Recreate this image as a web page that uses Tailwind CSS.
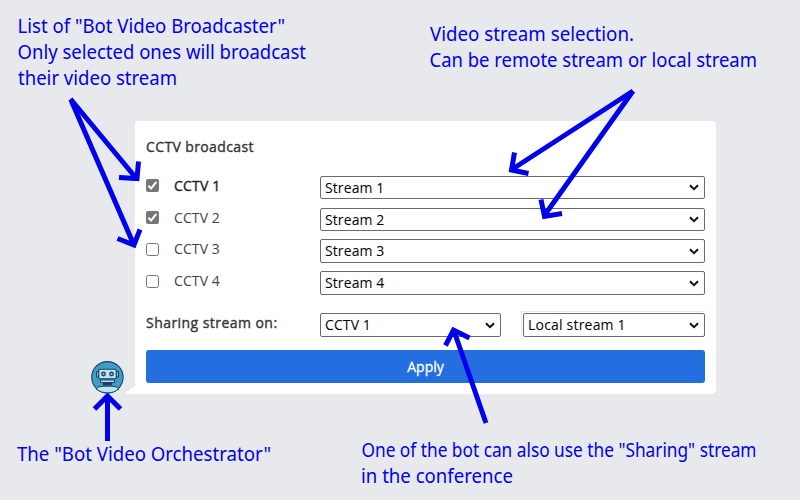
<!DOCTYPE html>
<html lang="en">
<head>
<meta charset="utf-8">
<title>CCTV broadcast</title>
<script src="https://cdn.jsdelivr.net/npm/@tailwindcss/browser@4"></script>
</head>
<body class="relative h-[500px] w-[800px] overflow-hidden bg-[#e8e9ed] pt-[121px] font-['Open_Sans','Noto_Sans',sans-serif] text-[14px] text-[#222]">
<svg class="absolute size-0" aria-hidden="true">
  <symbol id="chev" viewBox="0 0 10 7"><path d="M1 1.2 5 5.2 9 1.2" fill="none" stroke="#101010" stroke-width="2"/></symbol>
  <symbol id="on" viewBox="0 0 13 13"><rect width="13" height="13" rx="2" fill="#767676"/><path d="M2.4 6.8 5.1 9.4 10.4 2.8" fill="none" stroke="#fff" stroke-width="2"/></symbol>
  <symbol id="off" viewBox="0 0 13 13"><rect x=".5" y=".5" width="12" height="12" rx="2" fill="#fff" stroke="#767676"/></symbol>
</svg>

<main class="ml-[135px] flex h-[273px] w-[581px] flex-col rounded-[4px] rounded-bl-none bg-white px-[11px]">
  <h1 class="mt-[16px] h-[20px] leading-[20px] tracking-[0.38px] text-[#333] [-webkit-text-stroke:0.35px_#333]">CCTV broadcast</h1>
  <div class="mt-[19px] flex flex-col gap-[8px]">
    <label class="flex h-[24px] items-start">
      <svg class="mt-[3px] size-[13px]"><use href="#on"/></svg>
      <span class="ml-[15px] w-[146px] leading-[20px] tracking-[0.2px] [-webkit-text-stroke:0.35px_#222]">CCTV 1</span>
      <span class="flex h-[23px] w-[385px] items-center justify-between rounded-[2px] border border-[#6b6b6b] pr-[5px] pl-[4px] leading-[21px] tracking-[0.1px] text-black"><span>Stream 1</span><svg class="h-[7px] w-[10px]"><use href="#chev"/></svg></span>
    </label>
    <label class="flex h-[23px] items-start">
      <svg class="mt-[3px] size-[13px]"><use href="#on"/></svg>
      <span class="ml-[15px] w-[146px] leading-[20px] tracking-[0.1px] text-[#444]">CCTV 2</span>
      <span class="flex h-[23px] w-[385px] items-center justify-between rounded-[2px] border border-[#6b6b6b] pr-[5px] pl-[4px] leading-[21px] tracking-[0.1px] text-black"><span>Stream 2</span><svg class="h-[7px] w-[10px]"><use href="#chev"/></svg></span>
    </label>
    <label class="flex h-[24px] items-start">
      <svg class="mt-[4px] size-[13px]"><use href="#off"/></svg>
      <span class="ml-[15px] w-[146px] leading-[20px] tracking-[0.1px] text-[#444]">CCTV 3</span>
      <span class="flex h-[24px] w-[385px] items-center justify-between rounded-[2px] border border-[#6b6b6b] pr-[5px] pl-[4px] leading-[22px] tracking-[0.1px] text-black"><span>Stream 3</span><svg class="h-[7px] w-[10px]"><use href="#chev"/></svg></span>
    </label>
    <label class="flex h-[24px] items-start">
      <svg class="mt-[4px] size-[13px]"><use href="#off"/></svg>
      <span class="ml-[15px] w-[146px] leading-[20px] tracking-[0.1px] text-[#444]">CCTV 4</span>
      <span class="flex h-[24px] w-[385px] items-center justify-between rounded-[2px] border border-[#6b6b6b] pr-[5px] pl-[4px] leading-[22px] tracking-[0.1px] text-black"><span>Stream 4</span><svg class="h-[7px] w-[10px]"><use href="#chev"/></svg></span>
    </label>
  </div>
  <div class="mt-[16px] flex h-[28px] items-start">
    <span class="mt-[2px] w-[174px] leading-[20px] tracking-[0.45px] text-[#333] [-webkit-text-stroke:0.35px_#333]">Sharing stream on:</span>
    <span class="mt-[2px] flex h-[24px] w-[181px] items-center justify-between rounded-[2px] border border-[#6b6b6b] pr-[5px] pl-[4px] leading-[22px] tracking-[0.1px] text-black"><span>CCTV 1</span><svg class="h-[7px] w-[10px]"><use href="#chev"/></svg></span>
    <span class="ml-[20px] h-[28px] w-[184px] border-t border-l border-[#e8eaf5] pt-px pl-px"><span class="flex h-[24px] w-[182px] items-center justify-between rounded-[2px] border border-[#6b6b6b] pr-[5px] pl-[4px] leading-[22px] tracking-[0.2px] text-black"><span>Local stream 1</span><svg class="h-[7px] w-[10px]"><use href="#chev"/></svg></span></span>
  </div>
  <button class="mt-[11px] h-[33px] w-[559px] rounded-[3px] bg-[#246fe0] leading-[33px] text-white [-webkit-text-stroke:0.3px_white]">Apply</button>
</main>

<!-- Bubble tail, bot avatar and annotations laid over the dialog -->
<svg class="absolute inset-0 h-[500px] w-[800px]" viewBox="0 0 800 500">
  <path d="M135 386 124 394H136V386Z" fill="#fff"/>
  <g transform="translate(91 361)">
    <circle cx="16.4" cy="16.3" r="15.7" fill="#429dc5" stroke="#17425f" stroke-width="1.1"/>
    <path d="M5 28Q7 25.2 12 25.2H21Q26 25.2 28 28Q23 32 16.5 32T5 28Z" fill="#b9e5f8" stroke="#17425f"/>
    <path d="M12 21.5H21V24.500H12Z" fill="#17425f"/>
    <path d="M9.5 19H23.5V21.5H9.5Z" fill="#b9e5f8" stroke="#17425f"/>
    <path d="M5.5 10.5H8V16H5.5ZM25 10.5H27.5V16H25Z" fill="#70bce0" stroke="#17425f"/>
    <rect x="7.8" y="8.3" width="17.4" height="9.500" rx="1" fill="#b9e5f8" stroke="#17425f" stroke-width="1.1"/>
    <circle cx="12.5" cy="13" r="2.400" fill="#17425f"/><circle cx="20.5" cy="13" r="2.400" fill="#17425f"/>
    <circle cx="12.5" cy="13" r="1.100" fill="#e7b56b"/><circle cx="20.5" cy="13" r="1.100" fill="#e7b56b"/>
  </g>
  <g fill="none" stroke="#0000eb" stroke-width="5" stroke-linejoin="miter">
    <path d="M70.5 99 136 178M119 177.500 137 178.500 138.500 161.500"/>
    <path d="M71 100 133.500 244M117.500 238.500 134 245 140 229.500"/>
    <path d="M633 91 511 170M514.5 152.500 511.500 170 528.500 173.500"/>
    <path d="M633 91 544 216M541 199.500 544.500 216.500 562 213.500"/>
    <path d="M486 423 454 331M445.500 345.500 453.500 330 469.500 338"/>
    <path d="M107.500 441V397M94.500 409 107.500 396 120.500 409"/>
  </g>
  <g fill="#0000eb" font-size="19" font-family="'Noto Sans','Open Sans',sans-serif">
    <text x="17.5" y="33" textLength="267.5" lengthAdjust="spacingAndGlyphs">List of "Bot Video Broadcaster"</text>
    <text x="17.5" y="59" textLength="288.5" lengthAdjust="spacingAndGlyphs">Only selected ones will broadcast</text>
    <text x="18" y="85" textLength="159" lengthAdjust="spacingAndGlyphs">their video stream</text>
    <text x="430" y="41" textLength="204" lengthAdjust="spacingAndGlyphs">Video stream selection.</text>
    <text x="429.5" y="67" textLength="327.5" lengthAdjust="spacingAndGlyphs">Can be remote stream or local stream</text>
    <text x="17" y="461" textLength="254" lengthAdjust="spacingAndGlyphs">The "Bot Video Orchestrator"</text>
    <text x="361.5" y="457" textLength="395" lengthAdjust="spacingAndGlyphs">One of the bot can also use the "Sharing" stream</text>
    <text x="361" y="483" textLength="152" lengthAdjust="spacingAndGlyphs">in the conference</text>
  </g>
</svg>
</body>
</html>
